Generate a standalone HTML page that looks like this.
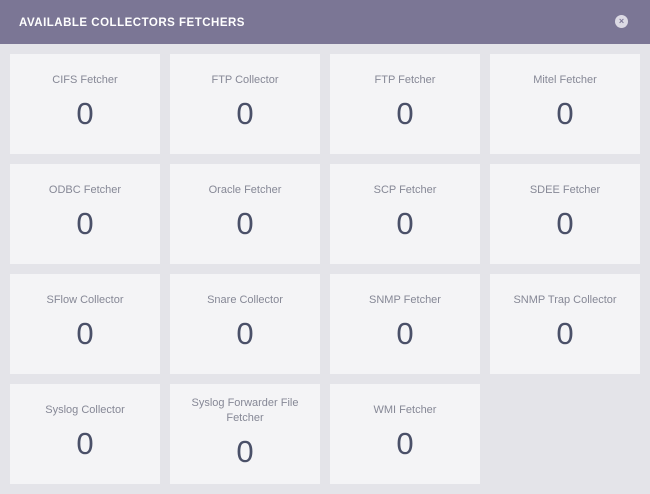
<!DOCTYPE html>
<html><head><style>
body{margin:0;width:650px;height:494px;background:#e4e4e9;font-family:"Liberation Sans",sans-serif;overflow:hidden;position:relative}
.h{position:absolute;left:0;top:0;width:650px;height:44px;background:#7b7695}
.h span{position:absolute;left:19px;top:17px;color:#fff;font-size:11.5px;font-weight:bold;letter-spacing:0.5px}
.x{position:absolute;left:615px;top:15px;width:13px;height:13px;border-radius:50%;background:#dcdae4;color:#7b7695;font-size:9px;line-height:13px;text-align:center;font-weight:bold}
.c{position:absolute;width:150px;height:100px;background:#f4f4f6;text-align:center}
.t{position:absolute;left:0;right:0;top:19px;font-size:11px;color:#868896;line-height:14px}
.n{position:absolute;left:0;right:0;top:42px;font-size:31px;color:#4a5068;line-height:36px}
.t2{top:12px;line-height:15px}.n2{top:50px}
</style></head><body>
<div class="h"><span>AVAILABLE COLLECTORS FETCHERS</span><div class="x">×</div></div>
<div class="c" style="left:10px;top:54px"><div class="t">CIFS Fetcher</div><div class="n">0</div></div>
<div class="c" style="left:170px;top:54px"><div class="t">FTP Collector</div><div class="n">0</div></div>
<div class="c" style="left:330px;top:54px"><div class="t">FTP Fetcher</div><div class="n">0</div></div>
<div class="c" style="left:490px;top:54px"><div class="t">Mitel Fetcher</div><div class="n">0</div></div>
<div class="c" style="left:10px;top:164px"><div class="t">ODBC Fetcher</div><div class="n">0</div></div>
<div class="c" style="left:170px;top:164px"><div class="t">Oracle Fetcher</div><div class="n">0</div></div>
<div class="c" style="left:330px;top:164px"><div class="t">SCP Fetcher</div><div class="n">0</div></div>
<div class="c" style="left:490px;top:164px"><div class="t">SDEE Fetcher</div><div class="n">0</div></div>
<div class="c" style="left:10px;top:274px"><div class="t">SFlow Collector</div><div class="n">0</div></div>
<div class="c" style="left:170px;top:274px"><div class="t">Snare Collector</div><div class="n">0</div></div>
<div class="c" style="left:330px;top:274px"><div class="t">SNMP Fetcher</div><div class="n">0</div></div>
<div class="c" style="left:490px;top:274px"><div class="t">SNMP Trap Collector</div><div class="n">0</div></div>
<div class="c" style="left:10px;top:384px"><div class="t">Syslog Collector</div><div class="n">0</div></div>
<div class="c" style="left:170px;top:384px"><div class="t t2">Syslog Forwarder File<br>Fetcher</div><div class="n n2">0</div></div>
<div class="c" style="left:330px;top:384px"><div class="t">WMI Fetcher</div><div class="n">0</div></div>
</body></html>
